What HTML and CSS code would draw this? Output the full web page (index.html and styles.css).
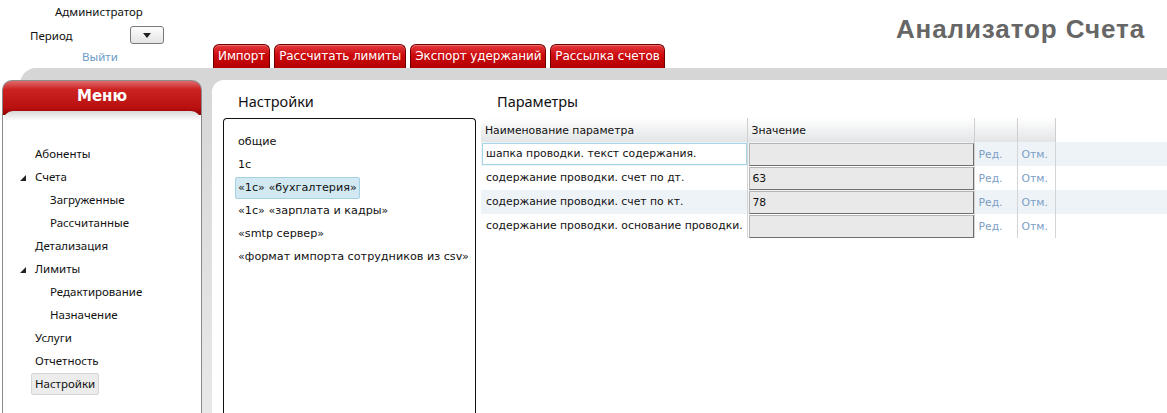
FILE: index.html
```html
<!DOCTYPE html>
<html lang="ru">
<head>
    <meta charset="UTF-8">
    <title>Анализатор Счета</title>
    <link rel="stylesheet" href="styles.css">
</head>
<body>
    <!-- Header -->
    <header class="top">
        <div class="user">
            <div class="user-name">Администратор</div>
            <div class="period-row">
                <span class="period-label">Период</span>
                <span class="period-select">
                    <svg width="8" height="5" viewBox="0 0 8 5"><polygon points="0,0 8,0 4,5" fill="#222"/></svg>
                </span>
            </div>
            <a class="logout" href="#">Выйти</a>
        </div>
        <nav class="tabs">
            <a class="tab" href="#">Импорт</a>
            <a class="tab" href="#">Рассчитать лимиты</a>
            <a class="tab" href="#">Экспорт удержаний</a>
            <a class="tab" href="#">Рассылка счетов</a>
        </nav>
        <h1 class="app-title">Анализатор Счета</h1>
    </header>

    <div class="workspace">
        <!-- Menu -->
        <aside class="menu">
            <div class="menu-head">Меню</div>
            <div class="menu-body">
                <div class="menu-row"><span class="expander"></span><span class="menu-item">Абоненты</span></div>
                <div class="menu-row"><span class="expander"><svg width="6" height="6" viewBox="0 0 6 6"><polygon points="6,0 6,6 0,6" fill="#222"/></svg></span><span class="menu-item">Счета</span></div>
                <div class="menu-row sub"><span class="expander"></span><span class="menu-item">Загруженные</span></div>
                <div class="menu-row sub"><span class="expander"></span><span class="menu-item">Рассчитанные</span></div>
                <div class="menu-row"><span class="expander"></span><span class="menu-item">Детализация</span></div>
                <div class="menu-row"><span class="expander"><svg width="6" height="6" viewBox="0 0 6 6"><polygon points="6,0 6,6 0,6" fill="#222"/></svg></span><span class="menu-item">Лимиты</span></div>
                <div class="menu-row sub"><span class="expander"></span><span class="menu-item">Редактирование</span></div>
                <div class="menu-row sub"><span class="expander"></span><span class="menu-item">Назначение</span></div>
                <div class="menu-row"><span class="expander"></span><span class="menu-item">Услуги</span></div>
                <div class="menu-row"><span class="expander"></span><span class="menu-item">Отчетность</span></div>
                <div class="menu-row"><span class="expander"></span><span class="menu-item active">Настройки</span></div>
            </div>
        </aside>

        <!-- Content -->
        <main class="content">
            <section class="settings">
                <h2 class="section-title">Настройки</h2>
                <div class="settings-list">
                    <div class="settings-item">общие</div>
                    <div class="settings-item">1с</div>
                    <div class="settings-item selected">«1с» «бухгалтерия»</div>
                    <div class="settings-item">«1с» «зарплата и кадры»</div>
                    <div class="settings-item">«smtp сервер»</div>
                    <div class="settings-item">«формат импорта сотрудников из csv»</div>
                </div>
            </section>

            <section class="params">
                <h2 class="section-title">Параметры</h2>
                <table class="grid">
                    <colgroup>
                        <col class="c-name">
                        <col class="c-value">
                        <col class="c-edit">
                        <col class="c-cancel">
                        <col>
                    </colgroup>
                    <thead>
                        <tr>
                            <th>Наименование параметра</th>
                            <th>Значение</th>
                            <th></th>
                            <th></th>
                            <th class="filler"></th>
                        </tr>
                    </thead>
                    <tbody>
                        <tr class="alt">
                            <td><div class="name-cell focused">шапка проводки. текст содержания.</div></td>
                            <td><div class="value-box"></div></td>
                            <td><a href="#">Ред.</a></td>
                            <td><a href="#">Отм.</a></td>
                            <td class="filler"></td>
                        </tr>
                        <tr>
                            <td><div class="name-cell">содержание проводки. счет по дт.</div></td>
                            <td><div class="value-box">63</div></td>
                            <td><a href="#">Ред.</a></td>
                            <td><a href="#">Отм.</a></td>
                            <td class="filler"></td>
                        </tr>
                        <tr class="alt">
                            <td><div class="name-cell">содержание проводки. счет по кт.</div></td>
                            <td><div class="value-box">78</div></td>
                            <td><a href="#">Ред.</a></td>
                            <td><a href="#">Отм.</a></td>
                            <td class="filler"></td>
                        </tr>
                        <tr>
                            <td><div class="name-cell">содержание проводки. основание проводки.</div></td>
                            <td><div class="value-box"></div></td>
                            <td><a href="#">Ред.</a></td>
                            <td><a href="#">Отм.</a></td>
                            <td class="filler"></td>
                        </tr>
                    </tbody>
                </table>
            </section>
        </main>
    </div>
</body>
</html>
```

FILE: styles.css
```css
/* Global */
* {
    margin: 0;
    padding: 0;
    box-sizing: border-box;
}
body {
    width: 1167px;
    height: 413px;
    overflow: hidden;
    background: #fff;
    color: #111;
    font-family: "Noto Sans", "Open Sans", sans-serif;
    font-size: 12px;
}
a {
    text-decoration: none;
}

/* Header */
.top {
    display: flex;
    height: 68px;
}
.user {
    width: 213px;
    padding-top: 4px;
    font-size: 11.5px;
}
.user-name {
    padding-left: 55px;
    line-height: 16px;
}
.period-row {
    display: flex;
    align-items: center;
    height: 20px;
    margin-top: 5px;
    padding-left: 30px;
}
.period-label {
    width: 100px;
}
.period-select {
    display: flex;
    align-items: center;
    justify-content: center;
    width: 34px;
    height: 18px;
    border: 1px solid #7a7a7a;
    border-radius: 3px;
    background: linear-gradient(#fdfdfd, #e4e4e4);
}
.logout {
    display: block;
    margin-top: 4px;
    padding-left: 82px;
    line-height: 16px;
    color: #6b9bc6;
}
.tabs {
    display: flex;
    align-self: flex-end;
    gap: 4px;
}
.tab {
    height: 24px;
    padding: 0 4px;
    line-height: 23px;
    color: #fff;
    font-family: "DejaVu Sans", sans-serif;
    font-size: 12px;
    letter-spacing: -0.1px;
    background: linear-gradient(#e4393c 0, #cc0a0e 45%, #b30000 100%);
    border: 1px solid #6e0000;
    border-bottom: none;
    border-radius: 6px 6px 0 0;
    box-shadow: inset 0 1px 0 rgba(255, 160, 160, 0.5);
}
.app-title {
    margin-left: auto;
    padding: 14px 22px 0 0;
    line-height: 30px;
    font-family: "Liberation Sans", Arial, sans-serif;
    font-size: 26px;
    font-weight: bold;
    letter-spacing: 0.9px;
    color: #666;
}

/* Workspace */
.workspace {
    display: flex;
    gap: 10px;
    height: 345px;
    margin-left: 20px;
    padding-top: 12px;
    background: linear-gradient(#d6d6d6, #e8e8e8);
    border-top-left-radius: 16px;
}

/* Menu */
.menu {
    width: 200px;
    margin-left: -18px;
    background: linear-gradient(#e06a6a 0, #cc2222 25%, #b80f0f 80%, #8e0000 100%) top / 100% 34px no-repeat, #fff;
    border: 1px solid #8a8a8a;
    border-bottom: none;
    border-radius: 10px 10px 0 0;
    overflow: hidden;
}
.menu-head {
    height: 30px;
    line-height: 30px;
    text-align: center;
    color: #fff;
    font-family: "DejaVu Sans", sans-serif;
    font-size: 15px;
    font-weight: bold;
}
.menu-body {
    height: 302px;
    padding-top: 32px;
    background: linear-gradient(#d9d9d9 0, #fff 10px);
    border-radius: 10px 10px 0 0;
    font-size: 11.5px;
}
.menu-row {
    display: flex;
    align-items: center;
    height: 22px;
    margin-bottom: 1px;
    padding-left: 17px;
}
.menu-row.sub {
    padding-left: 32px;
}
.expander {
    display: flex;
    align-items: center;
    width: 11px;
    padding-top: 1px;
}
.menu-item {
    padding: 0 3px;
    line-height: 20px;
    border: 1px solid transparent;
    border-radius: 2px;
}
.menu-item.active {
    background: #ececec;
    border-color: #d6d6d6;
}

/* Content */
.content {
    flex: 1;
    display: flex;
    padding: 11px 0 0 11px;
    background: #fff;
    border-top-left-radius: 12px;
}
.section-title {
    height: 27px;
    line-height: 20px;
    font-size: 14.5px;
    font-weight: normal;
    color: #111;
}
.settings {
    width: 253px;
    margin-right: 5px;
}
.settings .section-title {
    padding-left: 15px;
}
.settings-list {
    height: 295px;
    padding: 12px 0 0 11px;
    border: 1px solid #111;
    border-bottom: none;
    border-radius: 4px 4px 0 0;
    font-family: "DejaVu Sans", sans-serif;
    font-size: 11.2px;
}
.settings-item {
    width: fit-content;
    height: 22px;
    margin-bottom: 1px;
    padding: 0 2px;
    line-height: 20px;
    white-space: nowrap;
    border: 1px solid transparent;
    border-radius: 2px;
}
.settings-item.selected {
    background: #d2e9f2;
    border-color: #a3d1e2;
}

/* Parameters grid */
.params {
    flex: 1;
}
.params .section-title {
    padding-left: 16px;
}
.grid {
    width: 100%;
    border-collapse: collapse;
    table-layout: fixed;
    font-family: "DejaVu Sans", sans-serif;
    font-size: 10.8px;
}
.c-name {
    width: 266px;
}
.c-value {
    width: 227px;
}
.c-edit {
    width: 43px;
}
.c-cancel {
    width: 38px;
}
.grid th {
    height: 24px;
    padding: 0 4px;
    text-align: left;
    font-weight: normal;
    background: linear-gradient(#fff, #e2e4e6);
    border-right: 1px solid #cfcfcf;
}
.grid th.filler {
    background: none;
    border: none;
}
.grid td {
    height: 24px;
    padding: 0;
    border-right: 1px solid #d4d4d4;
}
.grid td.filler {
    border: none;
}
.grid td:nth-child(3),
.grid td:nth-child(4) {
    padding-left: 4px;
}
.grid tr.alt td {
    background: #eef3f8;
}
.grid td a {
    color: #7d9ec4;
}
.name-cell {
    height: 22px;
    margin: 0 0 0 1px;
    padding: 0 3px;
    line-height: 20px;
    white-space: nowrap;
    border: 1px solid transparent;
}
.name-cell.focused {
    background: #fff;
    border-color: #a6d6e6;
}
.value-box {
    height: 23px;
    margin-left: 1px;
    padding: 0 3px;
    line-height: 21px;
    background: #e9e9e9;
    border: 1px solid #b5b5b5;
    border-right-color: #6f6f6f;
    border-bottom-color: #6f6f6f;
}
```
